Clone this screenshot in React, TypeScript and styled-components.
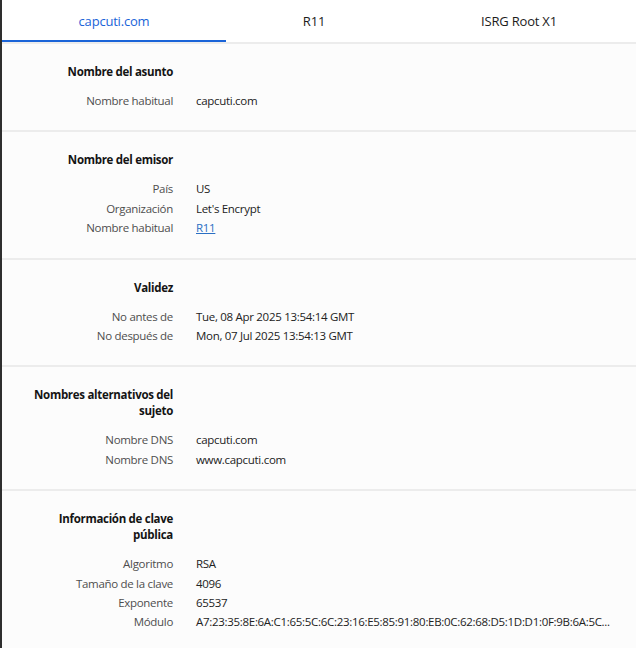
import styled, { createGlobalStyle } from "styled-components";

const GlobalStyle = createGlobalStyle`
  html, body {
    margin: 0;
    padding: 0;
    background: #ffffff;
  }
  body {
    font-family: "Open Sans", "Noto Sans", sans-serif;
  }
`;

const Frame = styled.div`
  width: 640px;
  height: 648px;
  display: flex;
  overflow: hidden;
  background: #ffffff;
`;

const EdgeBar = styled.div`
  width: 2px;
  background: #2e2e2e;
  flex-shrink: 0;
`;

const Panel = styled.div`
  flex: 1;
  background: #fcfcfc;
  margin-right: 4px;
`;

const TabBar = styled.div`
  display: flex;
  height: 42px;
  background: #ffffff;
  border-bottom: 2px solid #ececec;
`;

const Tab = styled.div<{ $active?: boolean; $width: number }>`
  width: ${(p) => p.$width}px;
  display: flex;
  align-items: center;
  justify-content: center;
  font-size: 13px;
  letter-spacing: -0.2px;
  color: ${(p) => (p.$active ? "#1a64d8" : "#1c1c1c")};
  box-shadow: ${(p) => (p.$active ? "inset 0 -2px 0 #1a64d8" : "none")};
`;

const Section = styled.section`
  display: grid;
  grid-template-columns: 143px 1fr;
  column-gap: 23px;
  padding: 20px 0 20px 28px;
  border-bottom: 2px solid #ececec;
  font-size: 11.5px;
  letter-spacing: -0.3px;
  line-height: 19.4px;

  &:last-child {
    border-bottom: none;
  }
`;

const Heading = styled.h2`
  grid-column: 1;
  margin: 0 0 11px;
  text-align: right;
  font-size: 11.5px;
  font-weight: 700;
  line-height: 16px;
  color: #141414;
`;

const Label = styled.div`
  grid-column: 1;
  text-align: right;
  color: #4e4e4e;
`;

const Value = styled.div`
  grid-column: 2;
  color: #222222;
  white-space: nowrap;
`;

const LinkValue = styled.a`
  color: #2a6fc4;
  text-decoration: underline;
`;

type Row = { label: string; value: string; link?: boolean };

const sections: { title: string; rows: Row[] }[] = [
  {
    title: "Nombre del asunto",
    rows: [{ label: "Nombre habitual", value: "capcuti.com" }],
  },
  {
    title: "Nombre del emisor",
    rows: [
      { label: "País", value: "US" },
      { label: "Organización", value: "Let's Encrypt" },
      { label: "Nombre habitual", value: "R11", link: true },
    ],
  },
  {
    title: "Validez",
    rows: [
      { label: "No antes de", value: "Tue, 08 Apr 2025 13:54:14 GMT" },
      { label: "No después de", value: "Mon, 07 Jul 2025 13:54:13 GMT" },
    ],
  },
  {
    title: "Nombres alternativos del sujeto",
    rows: [
      { label: "Nombre DNS", value: "capcuti.com" },
      { label: "Nombre DNS", value: "www.capcuti.com" },
    ],
  },
  {
    title: "Información de clave pública",
    rows: [
      { label: "Algoritmo", value: "RSA" },
      { label: "Tamaño de la clave", value: "4096" },
      { label: "Exponente", value: "65537" },
      {
        label: "Módulo",
        value:
          "A7:23:35:8E:6A:C1:65:5C:6C:23:16:E5:85:91:80:EB:0C:62:68:D5:1D:D1:0F:9B:6A:5C...",
      },
    ],
  },
];

export default function App() {
  return (
    <>
      <GlobalStyle />
      <Frame>
        <EdgeBar />
        <Panel>
          <TabBar>
            <Tab $active $width={224}>capcuti.com</Tab>
            <Tab $width={176}>R11</Tab>
            <Tab $width={234}>ISRG Root X1</Tab>
          </TabBar>
          {sections.map((s) => (
            <Section key={s.title}>
              <Heading>{s.title}</Heading>
              {s.rows.map((r, i) => [
                <Label key={`l${i}`}>{r.label}</Label>,
                <Value key={`v${i}`}>
                  {r.link ? <LinkValue href="#">{r.value}</LinkValue> : r.value}
                </Value>,
              ])}
            </Section>
          ))}
        </Panel>
      </Frame>
    </>
  );
}
